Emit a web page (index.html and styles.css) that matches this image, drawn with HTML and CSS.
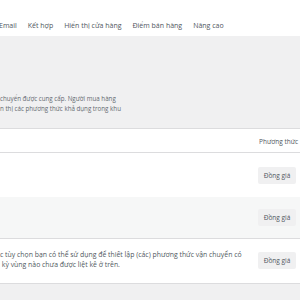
FILE: index.html
```html
<!DOCTYPE html>
<html lang="vi">
<head>
<meta charset="utf-8">
<link rel="stylesheet" href="styles.css">
</head>
<body>
<div class="page">
  <nav class="tabs">
    <span class="tab first">Email</span>
    <span class="tab">Kết hợp</span>
    <span class="tab">Hiển thị cửa hàng</span>
    <span class="tab">Điểm bán hàng</span>
    <span class="tab">Nâng cao</span>
  </nav>
  <section class="intro">
    <p class="desc">chuyển được cung cấp. Người mua hàng<br>n thị các phương thức khả dụng trong khu</p>
  </section>
  <div class="zones">
    <div class="row head">
      <div class="cell main"></div>
      <div class="cell methods">Phương thức</div>
    </div>
    <div class="row r1">
      <div class="cell main"></div>
      <div class="cell methods"><span class="method">Đồng giá</span></div>
    </div>
    <div class="row r2">
      <div class="cell main"></div>
      <div class="cell methods"><span class="method">Đồng giá</span></div>
    </div>
    <div class="row r3">
      <div class="cell main"><p class="rest">c tùy chọn bạn có thể sử dụng để thiết lập (các) phương thức vận chuyển có<br>&nbsp;kỳ vùng nào chưa được liệt kê ở trên.</p></div>
      <div class="cell methods"><span class="method">Đồng giá</span></div>
    </div>
  </div>
  <div class="after"></div>
</div>
</body>
</html>
```
FILE: styles.css
```css
* { box-sizing: border-box; }
html, body { margin: 0; padding: 0; }
body {
  width: 300px;
  height: 300px;
  overflow: hidden;
  background: #f0f0f1;
  font-family: "Open Sans", "Noto Sans", sans-serif;
  font-size: 6.5px;
  color: #50575e;
}
.page { width: 300px; }
.tabs {
  height: 36px;
  background: #fff;
  padding-top: 20px;
  display: flex;
  gap: 11px;
  line-height: 12px;
  font-size: 7px;
  color: #50575e;
  white-space: nowrap;
}
.tab.first { margin-left: -1px; }
.intro {
  height: 93px;
  padding-top: 58px;
  border-bottom: 1px solid #dcdcde;
}
.desc {
  margin: 0;
  line-height: 10px;
  font-size: 6.2px;
  color: #646970;
  white-space: nowrap;
}
.zones { background: #fff; }
.row {
  display: flex;
  align-items: center;
}
.cell.main { flex: 1; min-width: 0; }
.cell.methods {
  width: 42px;
  white-space: nowrap;
  overflow: hidden;
}
.head {
  height: 24px;
  border-bottom: 1px solid #dcdcde;
  padding-top: 2px;
}
.head .methods { padding-left: 1px; color: #50575e; }
.r1 { height: 44px; background: #fff; }
.r2 { height: 42px; background: #f6f7f7; border-bottom: 1px solid #dcdcde; }
.r3 { height: 45px; background: #fff; border-bottom: 1px solid #dcdcde; padding-bottom: 2px; }
.method {
  display: inline-block;
  width: 38px;
  height: 17px;
  line-height: 17px;
  text-align: center;
  background: #f0f0f1;
  border-radius: 2px;
  color: #50575e;
}
.rest {
  margin: 0;
  line-height: 10px;
  font-size: 6.9px;
  white-space: nowrap;
  color: #50575e;
}
.after { height: 20px; background: #f0f0f1; }
```
